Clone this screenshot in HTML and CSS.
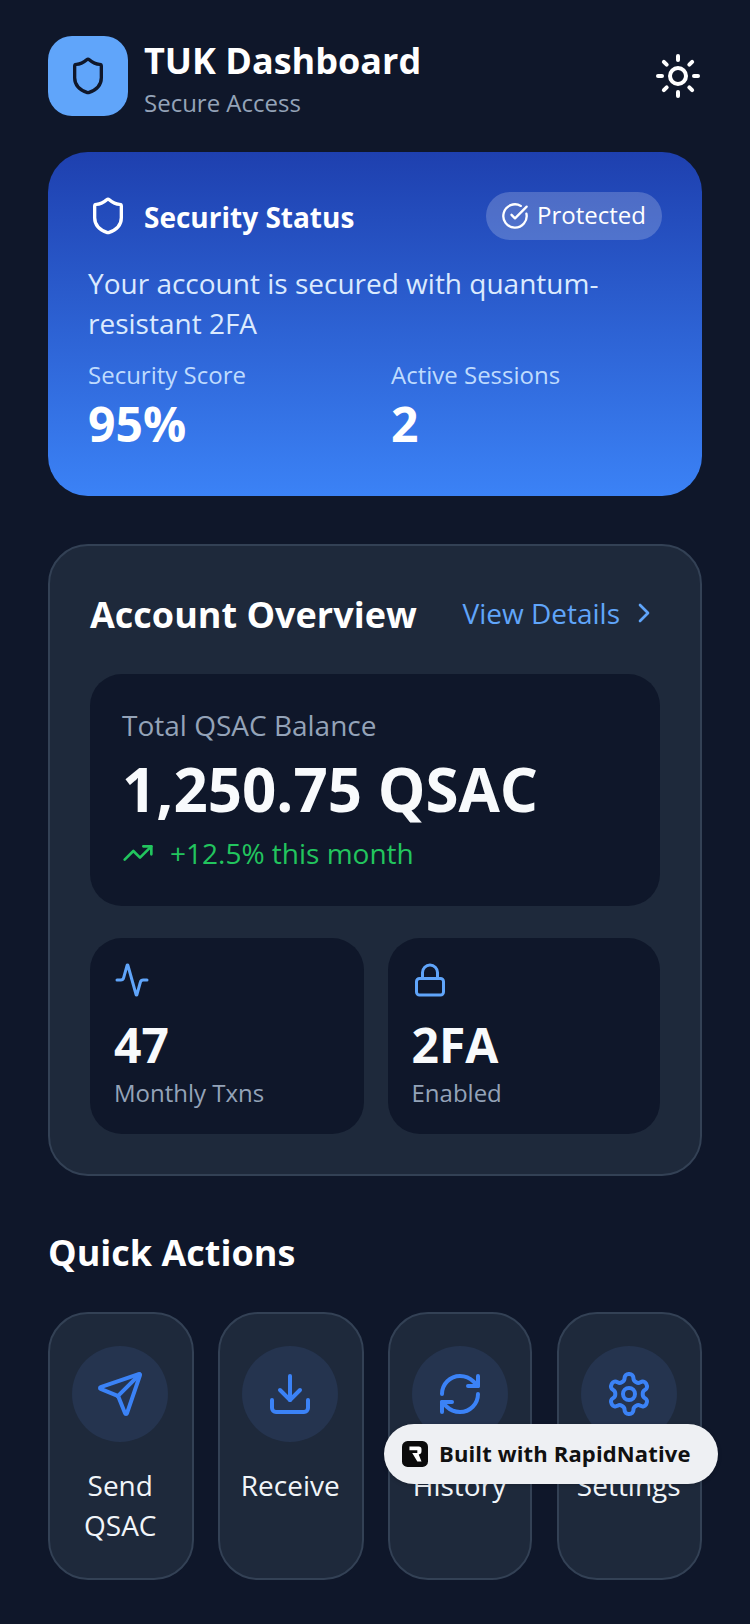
FILE: index.html
```html
<!DOCTYPE html>
<html>
<head>
    <title>TUK Dashboard</title>
    <link rel="stylesheet" href="styles.css">
</head>
<body>
    <div class="page">
        <div class="header">
            <div class="brand">
                <div class="logo">
                    <svg class="icon" width="40" height="40" viewBox="0 0 24 24"><path d="M20 13c0 5-3.5 7.5-7.66 8.95a1 1 0 0 1-.67-.01C7.5 20.5 4 18 4 13V6a1 1 0 0 1 1-1c2 0 4.5-1.2 6.24-2.72a1.17 1.17 0 0 1 1.52 0C14.51 3.81 17 5 19 5a1 1 0 0 1 1 1z"/></svg>
                </div>
                <div class="brand-text">
                    <div class="brand-title">TUK Dashboard</div>
                    <div class="brand-sub">Secure Access</div>
                </div>
            </div>
            <svg class="icon" width="48" height="48" viewBox="0 0 24 24"><circle cx="12" cy="12" r="4"/><path d="M12 2v2"/><path d="M12 20v2"/><path d="m4.93 4.93 1.41 1.41"/><path d="m17.66 17.66 1.41 1.41"/><path d="M2 12h2"/><path d="M20 12h2"/><path d="m6.34 17.66-1.41 1.41"/><path d="m19.07 4.93-1.41 1.41"/></svg>
        </div>

        <div class="security">
            <div class="security-top">
                <div class="security-title">
                    <svg class="icon" width="40" height="40" viewBox="0 0 24 24"><path d="M20 13c0 5-3.5 7.5-7.66 8.95a1 1 0 0 1-.67-.01C7.5 20.5 4 18 4 13V6a1 1 0 0 1 1-1c2 0 4.5-1.2 6.24-2.72a1.17 1.17 0 0 1 1.52 0C14.51 3.81 17 5 19 5a1 1 0 0 1 1 1z"/></svg>
                    <span>Security Status</span>
                </div>
                <div class="pill">
                    <svg class="icon" width="28" height="28" viewBox="0 0 24 24"><path d="M21.801 10A10 10 0 1 1 17 3.335"/><path d="m9 11 3 3L22 4"/></svg>
                    <span>Protected</span>
                </div>
            </div>
            <p class="security-text">Your account is secured with quantum-resistant 2FA</p>
            <div class="security-stats">
                <div>
                    <div class="stat-label">Security Score</div>
                    <div class="stat-value">95%</div>
                </div>
                <div>
                    <div class="stat-label">Active Sessions</div>
                    <div class="stat-value">2</div>
                </div>
            </div>
        </div>

        <div class="overview">
            <div class="overview-head">
                <h2 class="overview-title">Account Overview</h2>
                <div class="details">
                    <span>View Details</span>
                    <svg class="icon" width="32" height="32" viewBox="0 0 24 24"><path d="m9 18 6-6-6-6"/></svg>
                </div>
            </div>
            <div class="balance">
                <div class="balance-label">Total QSAC Balance</div>
                <div class="balance-value">1,250.75 QSAC</div>
                <div class="balance-change">
                    <svg class="icon" width="32" height="32" viewBox="0 0 24 24"><polyline points="22 7 13.5 15.5 8.5 10.5 2 17"/><polyline points="16 7 22 7 22 13"/></svg>
                    <span>+12.5% this month</span>
                </div>
            </div>
            <div class="mini-row">
                <div class="mini">
                    <svg class="icon" width="36" height="36" viewBox="0 0 24 24"><path d="M22 12h-2.48a2 2 0 0 0-1.93 1.46l-2.35 8.36a.25.25 0 0 1-.48 0L9.24 2.18a.25.25 0 0 0-.48 0l-2.35 8.36A2 2 0 0 1 4.49 12H2"/></svg>
                    <div class="mini-value">47</div>
                    <div class="mini-label">Monthly Txns</div>
                </div>
                <div class="mini">
                    <svg class="icon" width="36" height="36" viewBox="0 0 24 24"><rect x="3" y="11" width="18" height="11" rx="2" ry="2"/><path d="M7 11V7a5 5 0 0 1 10 0v4"/></svg>
                    <div class="mini-value">2FA</div>
                    <div class="mini-label">Enabled</div>
                </div>
            </div>
        </div>

        <h2 class="actions-title">Quick Actions</h2>
        <div class="actions">
            <div class="action">
                <div class="action-icon">
                    <svg class="icon" width="48" height="48" viewBox="0 0 24 24"><path d="M14.536 21.686a.5.5 0 0 0 .937-.024l6.5-19a.496.496 0 0 0-.635-.635l-19 6.5a.5.5 0 0 0-.024.937l7.93 3.18a2 2 0 0 1 1.112 1.11z"/><path d="m21.854 2.147-10.94 10.939"/></svg>
                </div>
                <div class="action-label">Send QSAC</div>
            </div>
            <div class="action">
                <div class="action-icon">
                    <svg class="icon" width="48" height="48" viewBox="0 0 24 24"><path d="M21 15v4a2 2 0 0 1-2 2H5a2 2 0 0 1-2-2v-4"/><polyline points="7 10 12 15 17 10"/><line x1="12" y1="15" x2="12" y2="3"/></svg>
                </div>
                <div class="action-label">Receive</div>
            </div>
            <div class="action action-narrow">
                <div class="action-icon">
                    <svg class="icon" width="48" height="48" viewBox="0 0 24 24"><path d="M3 12a9 9 0 0 1 9-9 9.75 9.75 0 0 1 6.74 2.74L21 8"/><path d="M21 3v5h-5"/><path d="M21 12a9 9 0 0 1-9 9 9.75 9.75 0 0 1-6.74-2.74L3 16"/><path d="M8 16H3v5"/></svg>
                </div>
                <div class="action-label">History</div>
            </div>
            <div class="action">
                <div class="action-icon">
                    <svg class="icon" width="48" height="48" viewBox="0 0 24 24"><path d="M12.22 2h-.44a2 2 0 0 0-2 2v.18a2 2 0 0 1-1 1.73l-.43.25a2 2 0 0 1-2 0l-.15-.08a2 2 0 0 0-2.73.73l-.22.38a2 2 0 0 0 .73 2.73l.15.1a2 2 0 0 1 1 1.72v.51a2 2 0 0 1-1 1.74l-.15.09a2 2 0 0 0-.73 2.73l.22.38a2 2 0 0 0 2.73.73l.15-.08a2 2 0 0 1 2 0l.43.25a2 2 0 0 1 1 1.73V20a2 2 0 0 0 2 2h.44a2 2 0 0 0 2-2v-.18a2 2 0 0 1 1-1.73l.43-.25a2 2 0 0 1 2 0l.15.08a2 2 0 0 0 2.73-.73l.22-.39a2 2 0 0 0-.73-2.73l-.15-.08a2 2 0 0 1-1-1.74v-.5a2 2 0 0 1 1-1.74l.15-.09a2 2 0 0 0 .73-2.73l-.22-.38a2 2 0 0 0-2.73-.73l-.15.08a2 2 0 0 1-2 0l-.43-.25a2 2 0 0 1-1-1.73V4a2 2 0 0 0-2-2z"/><circle cx="12" cy="12" r="3"/></svg>
                </div>
                <div class="action-label">Settings</div>
            </div>
        </div>

        <div class="built">
            <svg class="built-logo" width="26" height="26" viewBox="0 0 28 28">
                <rect width="28" height="28" rx="6" fill="#0b0b0b"/>
                <path d="M8 6h10q3 0 3 3v2q0 3-3 3.5l3 7.5h-4.5L11 13h5.5V10H8z" fill="#fff"/>
            </svg>
            <span>Built with RapidNative</span>
        </div>
    </div>
</body>
</html>
```

FILE: styles.css
```css
html, body {
    margin: 0;
    padding: 0;
    background-color: #0f172a;
}

body {
    font-family: "Open Sans", sans-serif;
    color: #fff;
}

.page {
    position: relative;
    box-sizing: border-box;
    width: 750px;
    height: 1624px;
    overflow: hidden;
    padding: 36px 48px 0;
}

.icon {
    display: block;
    flex-shrink: 0;
    fill: none;
    stroke: currentColor;
    stroke-width: 2;
    stroke-linecap: round;
    stroke-linejoin: round;
}

.header {
    display: flex;
    justify-content: space-between;
    align-items: center;
    height: 80px;
}

.brand {
    display: flex;
    gap: 16px;
    height: 80px;
}

.logo {
    display: flex;
    justify-content: center;
    align-items: center;
    width: 80px;
    height: 80px;
    border-radius: 24px;
    background-color: #60a5fa;
    color: #0f172a;
}

.brand-title {
    font-size: 36px;
    line-height: 50px;
    font-weight: 700;
}

.brand-sub {
    font-size: 24px;
    line-height: 33px;
    color: #94a3b8;
}

.security {
    box-sizing: border-box;
    height: 344px;
    margin-top: 36px;
    padding: 40px 40px 0;
    border-radius: 40px;
    background: linear-gradient(180deg, #1e40af, #3b82f6);
}

.security-top {
    display: flex;
    justify-content: space-between;
    align-items: center;
    height: 48px;
}

.security-title {
    display: flex;
    align-items: center;
    gap: 16px;
    font-size: 28px;
    font-weight: 700;
}

.security-title span {
    margin-top: 2px;
}

.pill {
    display: flex;
    align-items: center;
    gap: 8px;
    height: 48px;
    padding: 0 16px 0 15px;
    border-radius: 24px;
    background-color: rgba(255, 255, 255, 0.2);
    font-size: 24px;
}

.pill span {
    margin-top: -4px;
}

.security-text {
    margin: 23px 0 0;
    font-size: 28px;
    line-height: 40px;
    color: #dbeafe;
}

.security-stats {
    display: grid;
    grid-template-columns: 303px 1fr;
    margin-top: 16px;
}

.stat-label {
    font-size: 24px;
    line-height: 32px;
    color: #bfdbfe;
}

.stat-value {
    margin-top: 3px;
    font-size: 48px;
    line-height: 60px;
    font-weight: 700;
}

.overview {
    box-sizing: border-box;
    height: 632px;
    margin-top: 48px;
    padding: 40px;
    border: 2px solid #334155;
    border-radius: 40px;
    background-color: #1e293b;
}

.overview-head {
    display: flex;
    justify-content: space-between;
    align-items: center;
    height: 56px;
}

.overview-title {
    margin: 0;
    font-size: 36px;
    font-weight: 700;
}

.details {
    display: flex;
    align-items: center;
    gap: 8px;
    margin-top: -2px;
    font-size: 28px;
    color: #60a5fa;
}

.balance {
    box-sizing: border-box;
    height: 232px;
    margin-top: 32px;
    padding: 33px 32px 0;
    border-radius: 32px;
    background-color: #0f172a;
}

.balance-label {
    font-size: 28px;
    line-height: 36px;
    color: #94a3b8;
}

.balance-value {
    margin-top: 6px;
    font-size: 60px;
    line-height: 80px;
    font-weight: 700;
    color: #f8fafc;
}

.balance-change {
    display: flex;
    align-items: center;
    gap: 16px;
    margin-top: 4px;
    font-size: 28px;
    line-height: 40px;
    color: #22c55e;
}

.mini-row {
    display: grid;
    grid-template-columns: 273.5px 272.5px;
    gap: 24px;
    margin-top: 32px;
}

.mini {
    box-sizing: border-box;
    height: 196px;
    padding: 24px;
    border-radius: 32px;
    background-color: #0f172a;
    color: #60a5fa;
}

.mini-value {
    margin-top: 15px;
    font-size: 48px;
    line-height: 64px;
    font-weight: 700;
    color: #f8fafc;
}

.mini-label {
    font-size: 24px;
    line-height: 32px;
    color: #94a3b8;
}

.actions-title {
    margin: 51px 0 0;
    font-size: 36px;
    line-height: 52px;
    font-weight: 700;
}

.actions {
    display: flex;
    gap: 24.5px;
    margin-top: 33px;
}

.action {
    box-sizing: border-box;
    width: 145.5px;
    height: 268px;
    padding: 32px 1px 0 0;
    border: 2px solid #334155;
    border-radius: 40px;
    background-color: #1e293b;
    text-align: center;
}

.action-narrow {
    width: 144px;
}

.action-icon {
    display: flex;
    justify-content: center;
    align-items: center;
    width: 96px;
    height: 96px;
    margin: 0 auto;
    border-radius: 50%;
    background-color: #25344f;
    color: #3b82f6;
}

.action-label {
    margin: 23px auto 0;
    width: 110px;
    font-size: 28px;
    line-height: 40px;
    color: #f1f5f9;
}

.built {
    position: absolute;
    left: 384px;
    top: 1424px;
    box-sizing: border-box;
    display: flex;
    align-items: center;
    gap: 11px;
    width: 334px;
    height: 60px;
    padding-left: 18px;
    border-radius: 30px;
    background-color: #eef0f3;
    color: #111;
    font-size: 22px;
    letter-spacing: 0.14px;
    font-weight: 700;
    box-shadow: 0 1px 4px rgba(0, 0, 0, 0.2);
}

.built span {
    margin-top: -2px;
}

.built-logo {
    flex-shrink: 0;
}
```
